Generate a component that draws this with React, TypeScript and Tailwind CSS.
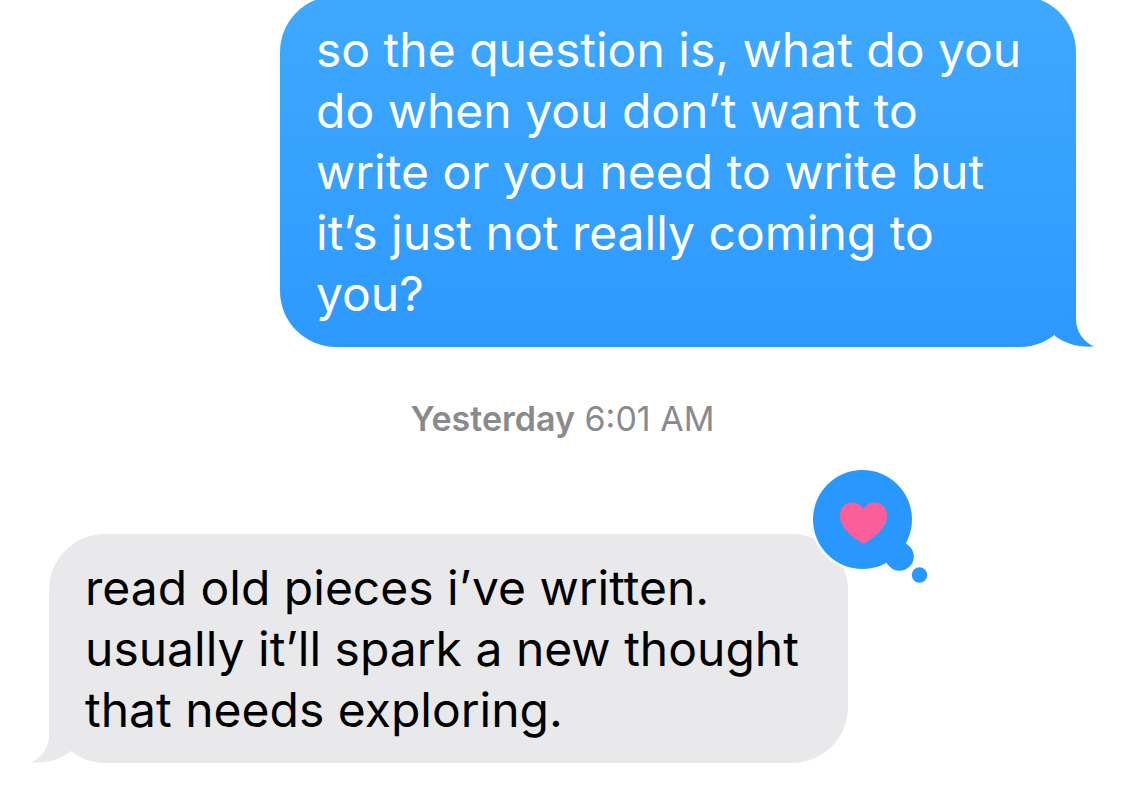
import type { ReactNode } from "react";
import clsx from "clsx";

type Sender = "me" | "them";

interface BubbleProps {
  sender: Sender;
  text: string;
  children?: ReactNode;
}

const Tail = ({ sender }: { sender: Sender }) => (
  <svg
    aria-hidden="true"
    viewBox="0 0 56 56"
    className={clsx(
      "absolute bottom-0 h-14 w-14",
      sender === "me"
        ? "-right-[19px] fill-[#2e9aff]"
        : "-left-[19px] -scale-x-100 fill-[#e9e9eb]"
    )}
  >
    <path d="M37 0 V28 C37 41 45 51 55 55.5 C40 56.5 27 53 16 45 L15 42 A54 54 0 0 0 35 0 Z" />
  </svg>
);

const Heart = () => (
  <svg
    role="img"
    aria-label="Loved"
    viewBox="0 0 120 120"
    className="absolute -right-[82px] -top-[67px] h-[120px] w-[120px]"
  >
    <circle cx="52.5" cy="52.5" r="52" fill="#fff" />
    <g fill="#2998fe">
      <circle cx="52.5" cy="52.5" r="49.5" />
      <circle cx="89.5" cy="89.5" r="14.3" />
      <circle cx="109.5" cy="108" r="7.7" />
    </g>
    <path
      d="M53.5 76.5 C52.5 76.5 49 74.5 45 71.5 C36 65 30 57 30 48.5 C30 41 35 35.5 42 35.5 C47 35.5 51 38 53.5 42.5 C56 38 60 35.5 65 35.5 C72 35.5 77 41 77 48.5 C77 57 71 65 62 71.5 C58 74.5 54.5 76.5 53.5 76.5 Z"
      fill="#fb5f99"
    />
  </svg>
);

const Bubble = ({ sender, text, children }: BubbleProps) => (
  <div
    className={clsx(
      "relative w-full rounded-[56px] py-[23px] pl-9 pr-7",
      sender === "me"
        ? "max-w-[796px] self-end bg-linear-to-b from-[#3fa9fe] to-[#2d99ff] text-white"
        : "max-w-[799px] self-start bg-[#e9e9eb] text-black"
    )}
  >
    <Tail sender={sender} />
    <p className="relative whitespace-pre-line text-[48px] leading-[61px]">
      {text}
    </p>
    {children}
  </div>
);

const App = () => {
  return (
    <div className="overflow-hidden bg-white font-['Inter','Liberation_Sans',sans-serif]">
      <main className="-mt-1 flex flex-col px-[49px] pb-[22px]">
        <Bubble
          sender="me"
          text={
            "so the question is, what do you\ndo when you don’t want to\nwrite or you need to write but\nit’s just not really coming to\nyou?"
          }
        />
        <p className="mb-[95px] mt-[52px] text-center text-[34px] leading-10 text-[#8a8a8e]">
          <strong className="font-semibold">Yesterday</strong> 6:01 AM
        </p>
        <Bubble
          sender="them"
          text={
            "read old pieces i’ve written.\nusually it’ll spark a new thought\nthat needs exploring."
          }
        >
          <Heart />
        </Bubble>
      </main>
    </div>
  );
};

export default App;
